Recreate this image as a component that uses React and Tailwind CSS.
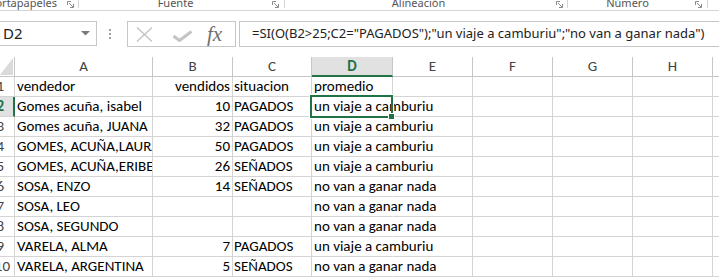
import React from "react";

const CELL_FONT = "font-['Carlito','Lato',sans-serif]";
const UI_FONT = "font-['Segoe_UI','Noto_Sans',sans-serif]";

function Launcher() {
  return (
    <svg width="7" height="7" viewBox="0 0 7 7" className="mt-[1px] shrink-0">
      <path d="M0.5 4V0.5H4" stroke="#8a8a8a" fill="none" strokeWidth="1" />
      <path d="M2 2L6 6M6.5 3V6.5H3" stroke="#8a8a8a" fill="none" strokeWidth="1" />
    </svg>
  );
}

function Ribbon() {
  return (
    <div className={`flex items-start h-[11px] border-b border-[#d5d5d5] text-[11px] leading-[12px] text-[#555] ${UI_FONT}`}>
      <div className="w-[79px] h-[8px] shrink-0 flex justify-end gap-[10px] pr-[4px] border-r border-[#d5d5d5]">
        <span className="-mt-[3px] whitespace-nowrap shrink-0">Portapapeles</span>
        <Launcher />
      </div>
      <div className="w-[206px] h-[8px] shrink-0 flex border-r border-[#d5d5d5] pr-[5px]">
        <span className="-mt-[3px] flex-1 text-center">Fuente</span>
        <Launcher />
      </div>
      <div className="w-[283px] h-[8px] shrink-0 flex border-r border-[#d5d5d5] pr-[4px]">
        <span className="-mt-[3px] flex-1 text-center pr-[4px]">Alineación</span>
        <Launcher />
      </div>
      <div className="w-[140px] h-[8px] shrink-0 flex border-r border-[#d5d5d5] pr-[5px]">
        <span className="-mt-[3px] flex-1 text-center pr-[8px]">Número</span>
        <Launcher />
      </div>
    </div>
  );
}

function FormulaBar() {
  return (
    <div className={`flex items-start h-[46px] pt-[10px] ${UI_FONT}`}>
      <div className="-ml-[1px] w-[98px] h-[25px] shrink-0 border border-[#c6c6c6] flex items-center justify-between pl-[3px] pr-[6px]">
        <span className="text-[15px] text-[#222]">D2</span>
        <svg width="9" height="5" viewBox="0 0 9 5">
          <path d="M0 0H9L4.5 4.5Z" fill="#7a7a7a" />
        </svg>
      </div>
      <div className="ml-[12px] mt-[8px] flex flex-col gap-[2px] shrink-0">
        <div className="w-[2px] h-[2px] bg-[#a0a0a0]" />
        <div className="w-[2px] h-[2px] bg-[#a0a0a0]" />
        <div className="w-[2px] h-[2px] bg-[#a0a0a0]" />
      </div>
      <div className="ml-[16px] w-[109px] h-[26px] shrink-0 border border-[#c6c6c6] flex items-center pl-[8px]">
        <svg width="17" height="15" viewBox="0 0 17 15" className="shrink-0">
          <path d="M1 0.5L16 14.5M16 0.5L1 14.5" stroke="#c4c4c4" strokeWidth="1.4" fill="none" />
        </svg>
        <svg width="21" height="12" viewBox="0 0 21 12" className="ml-[19px] mt-[3px] shrink-0">
          <path d="M1.5 6L7.5 10.5L19.5 1.5" stroke="#c4c4c4" strokeWidth="3" fill="none" />
        </svg>
        <span className="ml-[14px] text-[21px] leading-[26px] italic text-[#6e6e6e] font-['Liberation_Serif',serif] -mt-[1px]">fx</span>
      </div>
      <div className="ml-[3px] flex-1 -mr-[10px] h-[26px] border border-[#c6c6c6] pl-[12px] flex items-center text-[13px] text-[#222] whitespace-nowrap">
        =SI(O(B2&gt;25;C2="PAGADOS");"un viaje a camburiu";"no van a ganar nada")
      </div>
    </div>
  );
}

const COLS = [
  { k: "A", w: "w-[138px]" },
  { k: "B", w: "w-[80px]" },
  { k: "C", w: "w-[79px]" },
  { k: "D", w: "w-[81px]" },
  { k: "E", w: "w-[80px]" },
  { k: "F", w: "w-[80px]" },
  { k: "G", w: "w-[80px]" },
  { k: "H", w: "w-[80px]" },
  { k: "I", w: "w-[80px]" },
];

const ROWS = [
  { n: "1", a: "vendedor", b: "vendidos", c: "situacion", d: "promedio", bl: true },
  { n: "2", a: "Gomes acuña, isabel", b: "10", c: "PAGADOS", d: "un viaje a camburiu" },
  { n: "3", a: "Gomes acuña, JUANA", b: "32", c: "PAGADOS", d: "un viaje a camburiu" },
  { n: "4", a: "GOMES, ACUÑA,LAURA", b: "50", c: "PAGADOS", d: "un viaje a camburiu" },
  { n: "5", a: "GOMES, ACUÑA,ERIBERTO", b: "26", c: "SEÑADOS", d: "un viaje a camburiu" },
  { n: "6", a: "SOSA, ENZO", b: "14", c: "SEÑADOS", d: "no van a ganar nada" },
  { n: "7", a: "SOSA, LEO", b: "", c: "", d: "no van a ganar nada" },
  { n: "8", a: "SOSA, SEGUNDO", b: "", c: "", d: "no van a ganar nada" },
  { n: "9", a: "VARELA, ALMA", b: "7", c: "PAGADOS", d: "un viaje a camburiu" },
  { n: "10", a: "VARELA, ARGENTINA", b: "5", c: "SEÑADOS", d: "no van a ganar nada" },
];

function HeaderRow() {
  return (
    <div className="flex h-[20px] text-[15px] leading-[19px] text-[#444]">
      <div className="w-[15px] shrink-0 border-r border-b border-[#c6c6c6] flex items-end justify-end pr-[1px] pb-[1px]">
        <svg width="13" height="17" viewBox="0 0 13 17">
          <path d="M13 0V17H0Z" fill="#dadada" />
        </svg>
      </div>
      {COLS.map((c) =>
        c.k === "D" ? (
          <div
            key={c.k}
            className={`${c.w} shrink-0 border-r border-[#c6c6c6] border-b-2 border-b-[#217346] bg-[#e1e1e1] text-center font-bold text-[#217346]`}
          >
            {c.k}
          </div>
        ) : (
          <div key={c.k} className={`${c.w} shrink-0 border-r border-b border-[#c6c6c6] text-center`}>
            {c.k}
          </div>
        )
      )}
    </div>
  );
}

function DataRow({ r }) {
  const active = r.n === "2";
  const two = r.n.length > 1;
  return (
    <div className="flex h-[20px] text-[15px] leading-[19px]">
      <div
        className={
          active
            ? "w-[15px] shrink-0 border-b border-b-[#d4d4d4] border-r-2 border-r-[#217346] bg-[#e1e1e1] overflow-hidden"
            : "w-[15px] shrink-0 border-r border-b border-[#d4d4d4] overflow-hidden"
        }
      >
        <div
          className={
            active
              ? "w-[28px] -ml-[24px] text-right font-bold text-[#217346]"
              : two
              ? "w-[28px] -ml-[18px] text-right text-[#444]"
              : "w-[28px] -ml-[24px] text-right text-[#444]"
          }
        >
          {r.n}
        </div>
      </div>
      <div className="w-[138px] shrink-0 border-r border-b border-[#d4d4d4] overflow-hidden whitespace-nowrap pl-[2px] text-black">
        {r.a}
      </div>
      <div className="w-[80px] shrink-0 border-r border-b border-[#d4d4d4] overflow-hidden whitespace-nowrap text-right pr-[2px] text-black">
        {r.b}
      </div>
      <div className="w-[79px] shrink-0 border-r border-b border-[#d4d4d4] overflow-hidden whitespace-nowrap pl-[1px] text-black">
        {r.c}
      </div>
      <div
        className={
          r.bl
            ? "w-[81px] shrink-0 border-r border-b border-[#d4d4d4] whitespace-nowrap pl-[2px] text-black"
            : "w-[81px] shrink-0 border-b border-[#d4d4d4] border-r border-r-transparent whitespace-nowrap pl-[2px] text-black"
        }
      >
        {r.d}
      </div>
      {COLS.slice(4).map((c) => (
        <div key={c.k} className={`${c.w} shrink-0 border-r border-b border-[#d4d4d4]`} />
      ))}
    </div>
  );
}

export default function App() {
  return (
    <div className="relative w-[719px] h-[278px] overflow-hidden bg-white">
      <Ribbon />
      <FormulaBar />
      <div className={CELL_FONT}>
        <HeaderRow />
        {ROWS.map((r) => (
          <DataRow key={r.n} r={r} />
        ))}
      </div>
      <div className="absolute left-[310px] top-[95px] w-[83px] h-[23px] border-2 border-[#217346] shadow-[0_0_0_1px_white]" />
      <div className="absolute left-[388px] top-[113px] w-[7px] h-[7px] bg-[#217346] border border-white" />
    </div>
  );
}
